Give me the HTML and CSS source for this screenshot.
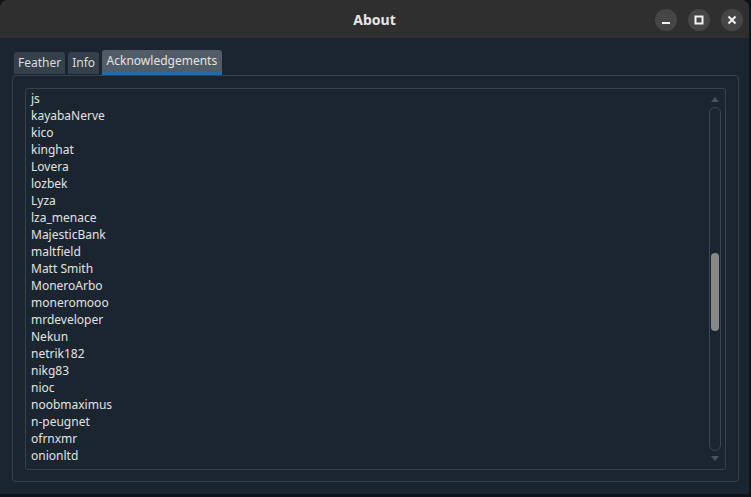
FILE: index.html
```html
<!DOCTYPE html>
<html>
<head>
<meta charset="utf-8">
<link rel="stylesheet" href="styles.css">
</head>
<body>
<div class="window">
  <div class="titlebar">
    <div class="title">About</div>
    <div class="controls">
      <div class="btn"><svg width="22" height="22" viewBox="0 0 22 22"><rect x="7" y="13" width="8" height="2" fill="#f2f2f2"/></svg></div>
      <div class="btn"><svg width="22" height="22" viewBox="0 0 22 22"><rect x="7.5" y="7.5" width="7" height="7" fill="none" stroke="#f2f2f2" stroke-width="2"/></svg></div>
      <div class="btn"><svg width="22" height="22" viewBox="0 0 22 22"><path d="M7.5 7.5 L14.5 14.5 M14.5 7.5 L7.5 14.5" stroke="#f2f2f2" stroke-width="2"/></svg></div>
    </div>
  </div>
  <div class="content">
    <div class="tabs">
      <div class="tab">Feather</div>
      <div class="tab">Info</div>
      <div class="tab active">Acknowledgements</div>
    </div>
    <div class="pane">
      <div class="listframe">
        <div class="list">
          <div class="item">js</div>
          <div class="item">kayabaNerve</div>
          <div class="item">kico</div>
          <div class="item">kinghat</div>
          <div class="item">Lovera</div>
          <div class="item">lozbek</div>
          <div class="item">Lyza</div>
          <div class="item">lza_menace</div>
          <div class="item">MajesticBank</div>
          <div class="item">maltfield</div>
          <div class="item">Matt Smith</div>
          <div class="item">MoneroArbo</div>
          <div class="item">moneromooo</div>
          <div class="item">mrdeveloper</div>
          <div class="item">Nekun</div>
          <div class="item">netrik182</div>
          <div class="item">nikg83</div>
          <div class="item">nioc</div>
          <div class="item">noobmaximus</div>
          <div class="item">n-peugnet</div>
          <div class="item">ofrnxmr</div>
          <div class="item">onionltd</div>
        </div>
        <div class="scrollbar">
          <div class="arrow up"></div>
          <div class="track"><div class="handle"></div></div>
          <div class="arrow down"></div>
        </div>
      </div>
    </div>
  </div>
</div>
</body>
</html>
```
FILE: styles.css
```css
html, body {
  margin: 0;
  padding: 0;
  background: #111417;
  width: 751px;
  height: 497px;
  overflow: hidden;
  font-family: "Noto Sans", "Open Sans", sans-serif;
}
.window {
  width: 749px;
  height: 494px;
  background: #1b2530;
  border-radius: 8px 8px 0 0;
  overflow: hidden;
  display: flex;
  flex-direction: column;
}
.titlebar {
  height: 38px;
  flex: none;
  background: #2f2f2f;
  position: relative;
  display: flex;
  align-items: center;
  justify-content: center;
}
.title {
  color: #e6e6e6;
  font-weight: bold;
  font-size: 14px;
  margin-top: 1px;
}
.controls {
  position: absolute;
  right: 6px;
  top: 9px;
  display: flex;
  gap: 11px;
}
.btn {
  width: 22px;
  height: 22px;
  border-radius: 50%;
  background: #464646;
}
.btn svg { display: block; }
.content {
  padding: 12px 0 0 12px;
}
.tabs {
  display: flex;
  align-items: flex-end;
  gap: 3px;
  padding-left: 2px;
  height: 25px;
}
.tab {
  height: 22px;
  line-height: 22px;
  padding: 0 4px;
  background: #34414b;
  color: #dcdcdc;
  font-size: 12px;
  border-radius: 3px 3px 0 0;
  margin-bottom: 1px;
}
.tab.active {
  height: 22px;
  line-height: 22px;
  padding: 0 4.5px;
  background: #505c66;
  color: #e4e4e4;
  border-bottom: 3px solid #1d6bb0;
  margin-bottom: 0;
}
.pane {
  border: 1px solid #34434e;
  border-radius: 4px;
  padding: 12px 13px 12px 12px;
  width: 700px;
  height: 381px;
}
.listframe {
  width: 699px;
  height: 380px;
  border: 1px solid #34434e;
  border-radius: 3px;
  display: flex;
  overflow: hidden;
}
.list {
  flex: 1;
  padding: 1px 0 0 5px;
  overflow: hidden;
}
.item {
  height: 17px;
  line-height: 17px;
  font-size: 12px;
  color: #e2e2e2;
}
.scrollbar {
  width: 12px;
  margin-right: 4px;
  display: flex;
  flex-direction: column;
  align-items: center;
}
.arrow {
  width: 0;
  height: 0;
  border-left: 4.5px solid transparent;
  border-right: 4.5px solid transparent;
}
.arrow.up {
  margin-top: 8px;
  border-bottom: 5px solid #46545f;
}
.arrow.down {
  margin-top: 5px;
  border-top: 5px solid #46545f;
}
.track {
  margin-top: 5px;
  width: 10px;
  height: 342px;
  border: 1px solid #3a4853;
  border-radius: 6px;
  position: relative;
}
.handle {
  position: absolute;
  left: 1px;
  top: 145px;
  width: 8px;
  height: 78px;
  border-radius: 4px;
  background: #888888;
}
```
